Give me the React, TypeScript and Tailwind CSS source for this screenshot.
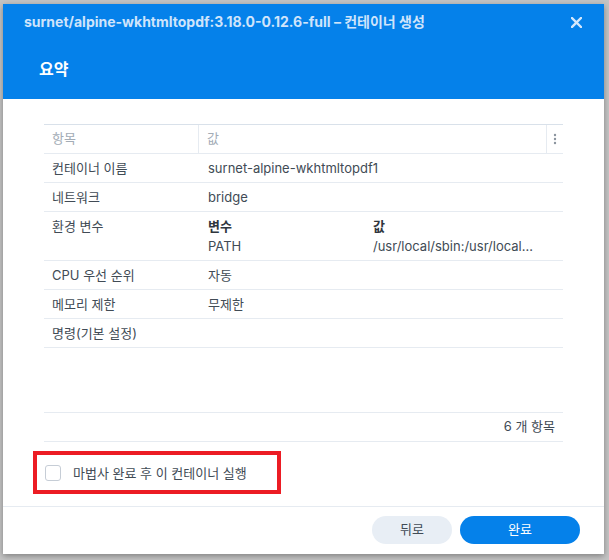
import React from "react";

const font = { fontFamily: 'Inter, "Noto Sans CJK KR", sans-serif' };

function Row({ label, children, tall }: { label: string; children?: React.ReactNode; tall?: boolean }) {
  return (
    <div className={`flex border-b border-[#e6ebf1] ${tall ? "h-[49px] items-start pt-[4px]" : "h-[29px] items-center"}`}>
      <div className="w-[156px] pl-[8px] leading-[20px] text-[13px] text-[#414b55]">{label}</div>
      <div className="flex-1 pl-[8px] leading-[20px] text-[13px] text-[#414b55]">{children}</div>
    </div>
  );
}

export default function App() {
  return (
    <div className="w-[609px] h-[560px] bg-[#c4c4c4] pl-[3px] pt-[4px] overflow-hidden" style={font}>
      <div className="w-[601px] h-[550px] bg-white flex flex-col shadow-[0_2px_6px_rgba(0,0,0,0.35)]">
        {/* Header */}
        <div className="h-[95px] bg-[#0581ea] flex flex-col">
          <div className="h-[36px] flex items-center justify-between pl-[21px] pr-[22px]">
            <span className="text-[14px] font-bold text-[#cfe4fb] leading-[20px]">
              surnet/alpine-wkhtmltopdf:3.18.0-0.12.6-full – 컨테이너 생성
            </span>
            <svg width="11" height="11" viewBox="0 0 11 11" className="text-[#d4e7fb]">
              <path d="M1 1 L10 10 M10 1 L1 10" stroke="currentColor" strokeWidth="2.4" strokeLinecap="square" />
            </svg>
          </div>
          <div className="mt-[17px] pl-[36px] text-[16px] font-bold text-white leading-[24px]">요약</div>
        </div>

        {/* Body */}
        <div className="h-[407px] px-[41px] pt-[25px] pb-[12px] flex flex-col">
          <div className="border-t border-[#d9e1ea]">
            <div className="flex h-[29px] items-stretch border-b border-[#e6ebf1] text-[13px] text-[#a3acb6]">
              <div className="w-[155px] pl-[8px] flex items-center border-r border-[#e6ebf1]">항목</div>
              <div className="flex-1 pl-[8px] flex items-center border-r border-[#e6ebf1]">값</div>
              <div className="w-[16px] flex items-center justify-center">
                <svg width="4" height="12" viewBox="0 0 4 12">
                  <circle cx="2" cy="2" r="1.2" fill="#8b949e" />
                  <circle cx="2" cy="6" r="1.2" fill="#8b949e" />
                  <circle cx="2" cy="10" r="1.2" fill="#8b949e" />
                </svg>
              </div>
            </div>
            <Row label="컨테이너 이름">surnet-alpine-wkhtmltopdf1</Row>
            <Row label="네트워크">bridge</Row>
            <Row label="환경 변수" tall>
              <div className="flex">
                <div className="w-[165px] font-semibold text-[#2f363d]">변수</div>
                <div className="flex-1 font-semibold text-[#2f363d]">값</div>
              </div>
              <div className="flex">
                <div className="w-[165px]">PATH</div>
                <div className="w-[163px] truncate">/usr/local/sbin:/usr/local/bin:/usr/sbin</div>
              </div>
            </Row>
            <Row label="CPU 우선 순위">자동</Row>
            <Row label="메모리 제한">무제한</Row>
            <Row label="명령(기본 설정)" />
          </div>
          <div className="flex-1" />
          <div className="border-t border-b border-[#e6ebf1] h-[30px] flex items-center justify-end pr-[8px] text-[13px] text-[#414b55]">
            6 개 항목
          </div>
          <div className="mt-[9px] -ml-[11px] w-[248px] h-[43px] border-[4px] border-[#ec1c24] flex items-center pl-[8px] gap-[12px]">
            <div className="w-[16px] h-[16px] rounded-[3px] border border-[#c6cdd6] bg-white" />
            <span className="text-[13px] text-[#414b55] leading-[20px]">마법사 완료 후 이 컨테이너 실행</span>
          </div>
        </div>

        {/* Footer */}
        <div className="flex-1 border-t border-[#e6ebf1] flex justify-end items-start pt-[9px] pr-[24px] gap-[8px]">
          <button className="w-[80px] h-[28px] rounded-full bg-[#e8eef5] text-[13px] text-[#414b55]">뒤로</button>
          <button className="w-[120px] h-[28px] rounded-full bg-[#0581ea] text-[13px] text-white">완료</button>
        </div>
      </div>
    </div>
  );
}
